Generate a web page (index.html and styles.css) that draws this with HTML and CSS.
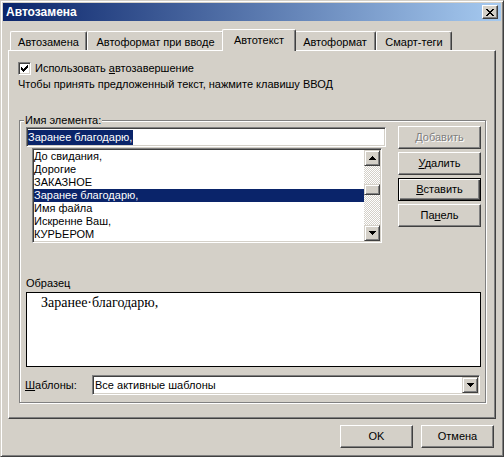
FILE: index.html
```html
<!DOCTYPE html>
<html lang="ru">
<head>
<meta charset="utf-8">
<title>Автозамена</title>
<link rel="stylesheet" href="styles.css">
</head>
<body>
<div class="window">
  <div class="titlebar">
    <span class="title">Автозамена</span>
    <span class="close-btn"><svg width="8" height="7" viewBox="0 0 8 7" shape-rendering="crispEdges"><path d="M0 0h2v1h-2z M6 0h2v1h-2z M1 1h2v1h-2z M5 1h2v1h-2z M2 2h4v1h-4z M3 3h2v1h-2z M2 4h4v1h-4z M1 5h2v1h-2z M5 5h2v1h-2z M0 6h2v1h-2z M6 6h2v1h-2z" fill="#000"/></svg></span>
  </div>
  <div class="content">
    <div class="tabs">
      <div class="tab tab-autocorrect">Автозамена</div>
      <div class="tab tab-asyoutype">Автоформат при вводе</div>
      <div class="tab tab-autotext active">Автотекст</div>
      <div class="tab tab-autoformat">Автоформат</div>
      <div class="tab tab-smarttags">Смарт-теги</div>
    </div>
    <div class="panel">
      <div class="check-row">
        <span class="checkbox"><svg width="7" height="7" viewBox="0 0 7 7" shape-rendering="crispEdges"><path d="M6 0h1v1h-1z M5 1h2v1h-2z M0 2h1v1h-1z M4 2h3v1h-3z M0 3h2v1h-2z M3 3h3v1h-3z M0 4h5v1h-5z M1 5h3v1h-3z M2 6h1v1h-1z" fill="#000"/></svg></span>
        <span>Использовать <u>а</u>втозавершение</span>
      </div>
      <div class="hint">Чтобы принять предложенный текст, нажмите клавишу ВВОД</div>
      <div class="group">
        <span class="group-title">Имя элемента:</span>
        <div class="group-top">
          <div class="entry-col">
            <div class="textbox"><span class="selected-text">Заранее благодарю,</span></div>
            <div class="listbox">
              <ul class="list-items">
                <li>До свидания,</li>
                <li>Дорогие</li>
                <li>ЗАКАЗНОЕ</li>
                <li class="selected">Заранее благодарю,</li>
                <li>Имя файла</li>
                <li>Искренне Ваш,</li>
                <li>КУРЬЕРОМ</li>
              </ul>
              <div class="vscroll">
                <span class="sb-btn"><svg width="7" height="4" viewBox="0 0 7 4" shape-rendering="crispEdges"><path d="M3 0h1v1h-1z M2 1h3v1h-3z M1 2h5v1h-5z M0 3h7v1h-7z" fill="#000"/></svg></span>
                <span class="sb-track"><span class="sb-thumb"></span></span>
                <span class="sb-btn"><svg width="7" height="4" viewBox="0 0 7 4" shape-rendering="crispEdges"><path d="M0 0h7v1h-7z M1 1h5v1h-5z M2 2h3v1h-3z M3 3h1v1h-1z" fill="#000"/></svg></span>
              </div>
            </div>
          </div>
          <div class="btn-col">
            <button class="btn disabled">Добавить</button>
            <button class="btn"><u>У</u>далить</button>
            <button class="btn default"><u>В</u>ставить</button>
            <button class="btn">Па<u>н</u>ель</button>
          </div>
        </div>
        <div class="sample-label">Образец</div>
        <div class="sample">Заранее·благодарю,</div>
        <div class="templates-row">
          <span class="templates-label"><u>Ш</u>аблоны:</span>
          <div class="combo">
            <span class="combo-text">Все активные шаблоны</span>
            <span class="combo-btn"><svg width="7" height="4" viewBox="0 0 7 4" shape-rendering="crispEdges"><path d="M0 0h7v1h-7z M1 1h5v1h-5z M2 2h3v1h-3z M3 3h1v1h-1z" fill="#000"/></svg></span>
          </div>
        </div>
      </div>
    </div>
    <div class="footer">
      <button class="btn footer-btn">OK</button>
      <button class="btn footer-btn">Отмена</button>
    </div>
  </div>
</div>
</body>
</html>
```
FILE: styles.css
```css
* { box-sizing: border-box; }
html, body { margin: 0; padding: 0; }
body {
  background: #d4d0c8;
  font-family: "Liberation Sans", Arial, sans-serif;
  font-size: 11px;
  line-height: 13px;
  color: #000;
}
u { text-decoration: underline; text-underline-offset: 1px; }

.window {
  width: 504px;
  height: 457px;
  display: flex;
  flex-direction: column;
  padding: 2px;
  border: 1px solid;
  border-color: #d4d0c8 #404040 #404040 #d4d0c8;
  box-shadow: inset 1px 1px 0 #fff, inset -1px -1px 0 #808080;
  background: #d4d0c8;
}

.titlebar {
  height: 18px;
  flex: none;
  display: flex;
  align-items: center;
  justify-content: space-between;
  padding: 0 3px 0 3px;
  background: linear-gradient(to right, #0a246a, #a6caf0);
}
.title { color: #fff; font-weight: bold; font-size: 12px; }
.close-btn {
  width: 16px;
  height: 14px;
  display: flex;
  align-items: center;
  justify-content: center;
  background: #d4d0c8;
  border: 1px solid;
  border-color: #fff #404040 #404040 #fff;
  box-shadow: inset -1px -1px 0 #808080;
}

.content {
  flex: 1;
  display: flex;
  flex-direction: column;
  padding: 8px 5px 6px;
}

.tabs {
  display: flex;
  align-items: flex-end;
  height: 21px;
  flex: none;
  padding-left: 2px;
  position: relative;
  z-index: 1;
}
.tab {
  height: 19px;
  padding-top: 4px;
  text-align: center;
  white-space: nowrap;
  background: #d4d0c8;
  border-top: 1px solid #fff;
  border-left: 1px solid #fff;
  border-right: 1px solid #404040;
  box-shadow: inset -1px 0 0 #808080;
  border-radius: 2px 2px 0 0;
}
.tab-autocorrect { width: 77px; }
.tab-asyoutype { width: 137px; }
.tab-autotext { width: 74px; }
.tab-autoformat { width: 82px; }
.tab-smarttags { width: 76px; }
.tab.active {
  height: 22px;
  margin: 0 -2px -1px;
  padding-top: 4px;
  position: relative;
  z-index: 2;
}

.panel {
  height: 369px;
  flex: none;
  border: 1px solid;
  border-color: #fff #404040 #404040 #fff;
  box-shadow: inset -1px -1px 0 #808080;
  padding: 11px 9px 0 9px;
}

.check-row {
  display: flex;
  align-items: center;
  gap: 4px;
  height: 13px;
}
.checkbox {
  width: 13px;
  height: 13px;
  flex: none;
  background: #fff;
  border: 1px solid;
  border-color: #808080 #fff #fff #808080;
  box-shadow: inset 1px 1px 0 #404040, inset -1px -1px 0 #d4d0c8;
  display: flex;
  align-items: center;
  justify-content: center;
}
.hint { margin-top: 3px; }

.group {
  position: relative;
  margin: 29px 0 0 1px;
  border: 1px solid #808080;
  box-shadow: inset 1px 1px 0 #fff, 1px 1px 0 #fff;
  padding: 6px 4px 7px 6px;
}
.group-title {
  position: absolute;
  top: -7px;
  left: 4px;
  padding: 0 1px;
  background: #d4d0c8;
}

.group-top {
  display: flex;
  align-items: flex-start;
  gap: 12px;
}
.entry-col { width: 360px; flex: none; }
.textbox {
  height: 20px;
  background: #fff;
  border: 1px solid;
  border-color: #808080 #fff #fff #808080;
  box-shadow: inset 1px 1px 0 #404040, inset -1px -1px 0 #d4d0c8;
  padding: 1px;
  display: flex;
  align-items: center;
}
.selected-text {
  background: #0a246a;
  color: #fff;
  line-height: 15px;
  padding-right: 1px;
}
.listbox {
  width: 350px;
  height: 95px;
  margin: 1px 0 0 6px;
  background: #fff;
  border: 1px solid;
  border-color: #808080 #fff #fff #808080;
  box-shadow: inset 1px 1px 0 #404040, inset -1px -1px 0 #d4d0c8;
  padding: 1px;
  display: flex;
}
.list-items {
  flex: 1;
  margin: 0;
  padding: 0;
  list-style: none;
}
.list-items li { height: 13px; white-space: nowrap; }
.list-items li.selected { background: #0a246a; color: #fff; }

.vscroll {
  width: 16px;
  flex: none;
  display: flex;
  flex-direction: column;
}
.sb-btn {
  width: 16px;
  height: 16px;
  flex: none;
  display: flex;
  align-items: center;
  justify-content: center;
  background: #d4d0c8;
  border: 1px solid;
  border-color: #d4d0c8 #404040 #404040 #d4d0c8;
  box-shadow: inset 1px 1px 0 #fff, inset -1px -1px 0 #808080;
}
.sb-track {
  flex: 1;
  background-color: #fff;
  background-image: repeating-conic-gradient(#d4d0c8 0 25%, #fff 0 50%);
  background-size: 2px 2px;
}
.sb-thumb {
  display: block;
  height: 11px;
  margin-top: 18px;
  background: #d4d0c8;
  border: 1px solid;
  border-color: #d4d0c8 #404040 #404040 #d4d0c8;
  box-shadow: inset 1px 1px 0 #fff, inset -1px -1px 0 #808080;
}

.btn-col {
  width: 83px;
  flex: none;
  margin-top: -1px;
  display: flex;
  flex-direction: column;
  gap: 3px;
}
.btn {
  font: inherit;
  line-height: 13px;
  color: #000;
  background: #d4d0c8;
  height: 23px;
  margin: 0;
  padding: 0;
  border: 1px solid;
  border-color: #fff #404040 #404040 #fff;
  box-shadow: inset -1px -1px 0 #808080;
}
.btn.default {
  border-color: #000;
  box-shadow: inset 1px 1px 0 #fff, inset -1px -1px 0 #404040, inset -2px -2px 0 #808080;
}
.btn.disabled { color: #808080; text-shadow: 1px 1px 0 #fff; }

.sample-label { margin-top: 34px; }
.sample {
  margin-top: 2px;
  height: 75px;
  background: #fff;
  border: 1px solid #000;
  padding: 2px 0 0 14px;
  font-family: "Liberation Serif", "Times New Roman", serif;
  font-size: 14px;
  line-height: 15px;
}

.templates-row {
  margin-top: 8px;
  display: flex;
  align-items: center;
  height: 20px;
}
.templates-label { width: 67px; flex: none; margin-left: -1px; }
.combo {
  flex: 1;
  height: 20px;
  margin-right: 1px;
  background: #fff;
  border: 1px solid;
  border-color: #808080 #fff #fff #808080;
  box-shadow: inset 1px 1px 0 #404040, inset -1px -1px 0 #d4d0c8;
  padding: 1px;
  display: flex;
  align-items: center;
}
.combo-text { flex: 1; padding-left: 1px; }
.combo-btn {
  width: 16px;
  height: 16px;
  flex: none;
  display: flex;
  align-items: center;
  justify-content: center;
  background: #d4d0c8;
  border: 1px solid;
  border-color: #d4d0c8 #404040 #404040 #d4d0c8;
  box-shadow: inset 1px 1px 0 #fff, inset -1px -1px 0 #808080;
}

.footer {
  flex: none;
  margin-top: 6px;
  display: flex;
  justify-content: flex-end;
  gap: 8px;
  padding-right: 2px;
}
.footer-btn { width: 73px; }
```
